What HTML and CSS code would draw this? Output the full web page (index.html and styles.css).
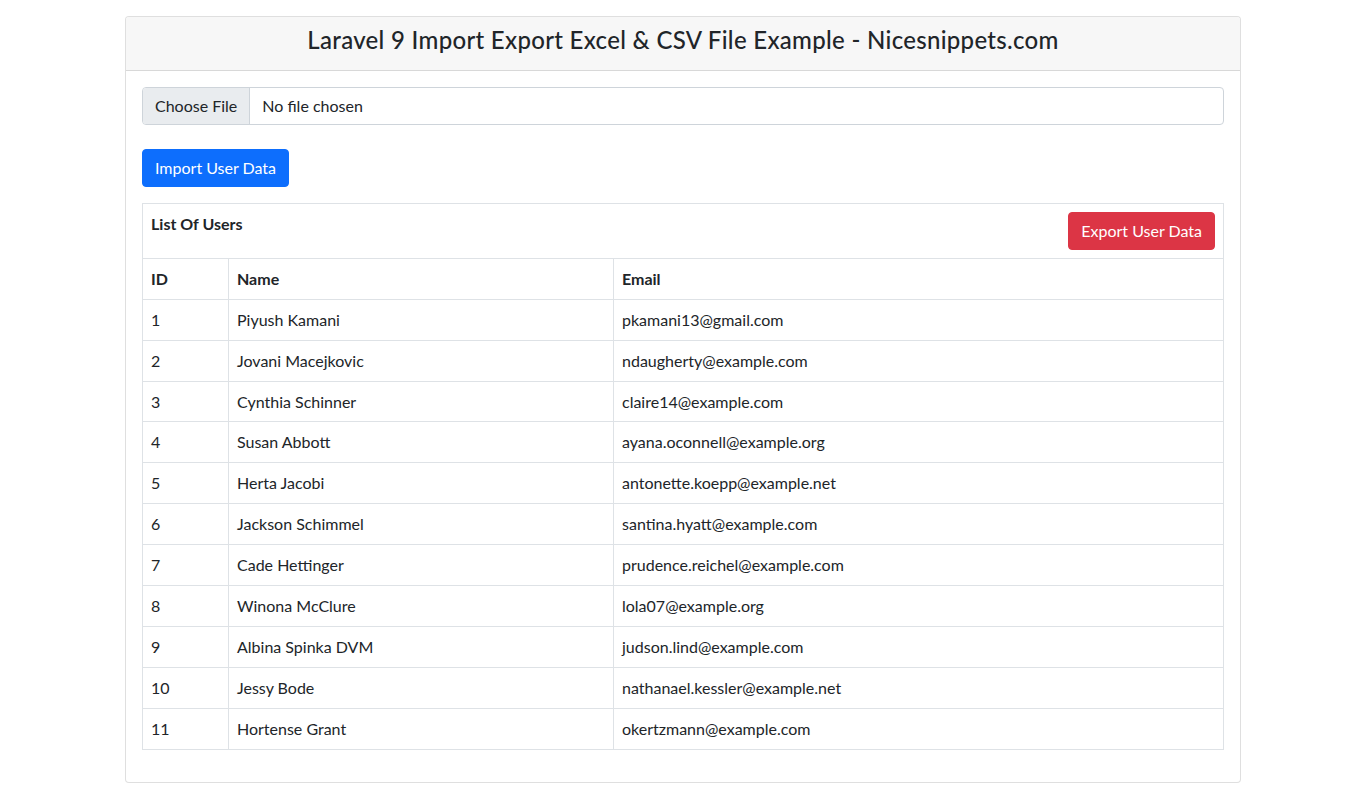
FILE: index.html
```html
<!DOCTYPE html>
<html lang="en">
<head>
<meta charset="utf-8">
<title>Laravel 9 Import Export Excel &amp; CSV File Example</title>
<link rel="stylesheet" href="styles.css">
</head>
<body>
<div class="container">
  <div class="card">
    <div class="card-header">
      <h4 class="title">Laravel 9 Import Export Excel &amp; CSV File Example - Nicesnippets.com</h4>
    </div>
    <div class="card-body">
      <form class="import-form">
        <div class="file-input">
          <span class="file-btn">Choose File</span>
          <span class="file-name">No file chosen</span>
        </div>
        <button type="button" class="btn btn-primary">Import User Data</button>
      </form>
      <table class="table">
        <thead>
          <tr>
            <th colspan="3" class="list-head">
              <div class="list-row">
                <span>List Of Users</span>
                <button type="button" class="btn btn-danger">Export User Data</button>
              </div>
            </th>
          </tr>
          <tr>
            <th class="col-id">ID</th>
            <th class="col-name">Name</th>
            <th>Email</th>
          </tr>
        </thead>
        <tbody>
          <tr><td>1</td><td>Piyush Kamani</td><td>pkamani13@gmail.com</td></tr>
          <tr><td>2</td><td>Jovani Macejkovic</td><td>ndaugherty@example.com</td></tr>
          <tr><td>3</td><td>Cynthia Schinner</td><td>claire14@example.com</td></tr>
          <tr><td>4</td><td>Susan Abbott</td><td>ayana.oconnell@example.org</td></tr>
          <tr><td>5</td><td>Herta Jacobi</td><td>antonette.koepp@example.net</td></tr>
          <tr><td>6</td><td>Jackson Schimmel</td><td>santina.hyatt@example.com</td></tr>
          <tr><td>7</td><td>Cade Hettinger</td><td>prudence.reichel@example.com</td></tr>
          <tr><td>8</td><td>Winona McClure</td><td>lola07@example.org</td></tr>
          <tr><td>9</td><td>Albina Spinka DVM</td><td>judson.lind@example.com</td></tr>
          <tr><td>10</td><td>Jessy Bode</td><td>nathanael.kessler@example.net</td></tr>
          <tr><td>11</td><td>Hortense Grant</td><td>okertzmann@example.com</td></tr>
        </tbody>
      </table>
    </div>
  </div>
</div>
</body>
</html>
```
FILE: styles.css
```css
* { box-sizing: border-box; }
body {
  margin: 0;
  font-family: Lato, "Open Sans", "Liberation Sans", sans-serif;
  font-size: 16px;
  line-height: 1.5;
  color: #212529;
  background: #fff;
}
.container {
  max-width: 1140px;
  margin: 0 auto;
  padding: 0 12px;
}
.card {
  margin-top: 16px;
  border: 1px solid rgba(0,0,0,.125);
  border-radius: 4px;
  background: #fff;
}
.card-header {
  background: #f7f7f7;
  border-bottom: 1px solid rgba(0,0,0,.125);
  padding: 9px 16px 7px;
  border-radius: 3px 3px 0 0;
  text-align: center;
}
.title {
  margin: 0 0 8px;
  font-size: 24px;
  font-weight: 500;
  line-height: 1.2;
  letter-spacing: 0.3px;
}
.card-body { padding: 16px; }
.import-form { display: flex; flex-direction: column; align-items: flex-start; }
.file-input {
  display: flex;
  width: 100%;
  height: 38px;
  border: 1px solid #ced4da;
  border-radius: 4px;
  overflow: hidden;
  margin-bottom: 24px;
}
.file-btn {
  background: #e9ecef;
  border-right: 1px solid #ced4da;
  padding: 6px 12px;
  color: #212529;
}
.file-name { padding: 6px 12px; }
.btn {
  font-family: inherit;
  font-size: 16px;
  line-height: 1.5;
  padding: 6px 12px;
  border: 1px solid transparent;
  border-radius: 4px;
  color: #fff;
  cursor: pointer;
}
.btn-primary { background: #0d6efd; border-color: #0d6efd; }
.btn-danger { background: #dc3545; border-color: #dc3545; }
.table {
  width: 100%;
  margin-top: 16px;
  margin-bottom: 16px;
  border-collapse: collapse;
  border: 1px solid #dee2e6;
}
.table th, .table td {
  border: 1px solid #dee2e6;
  padding: 8px;
  text-align: left;
  vertical-align: top;
  line-height: 23.9px;
}
.table th { font-weight: 700; }
.list-row {
  display: flex;
  justify-content: space-between;
  align-items: flex-start;
}
.col-id { width: 86px; }
.col-name { width: 385px; }
```
